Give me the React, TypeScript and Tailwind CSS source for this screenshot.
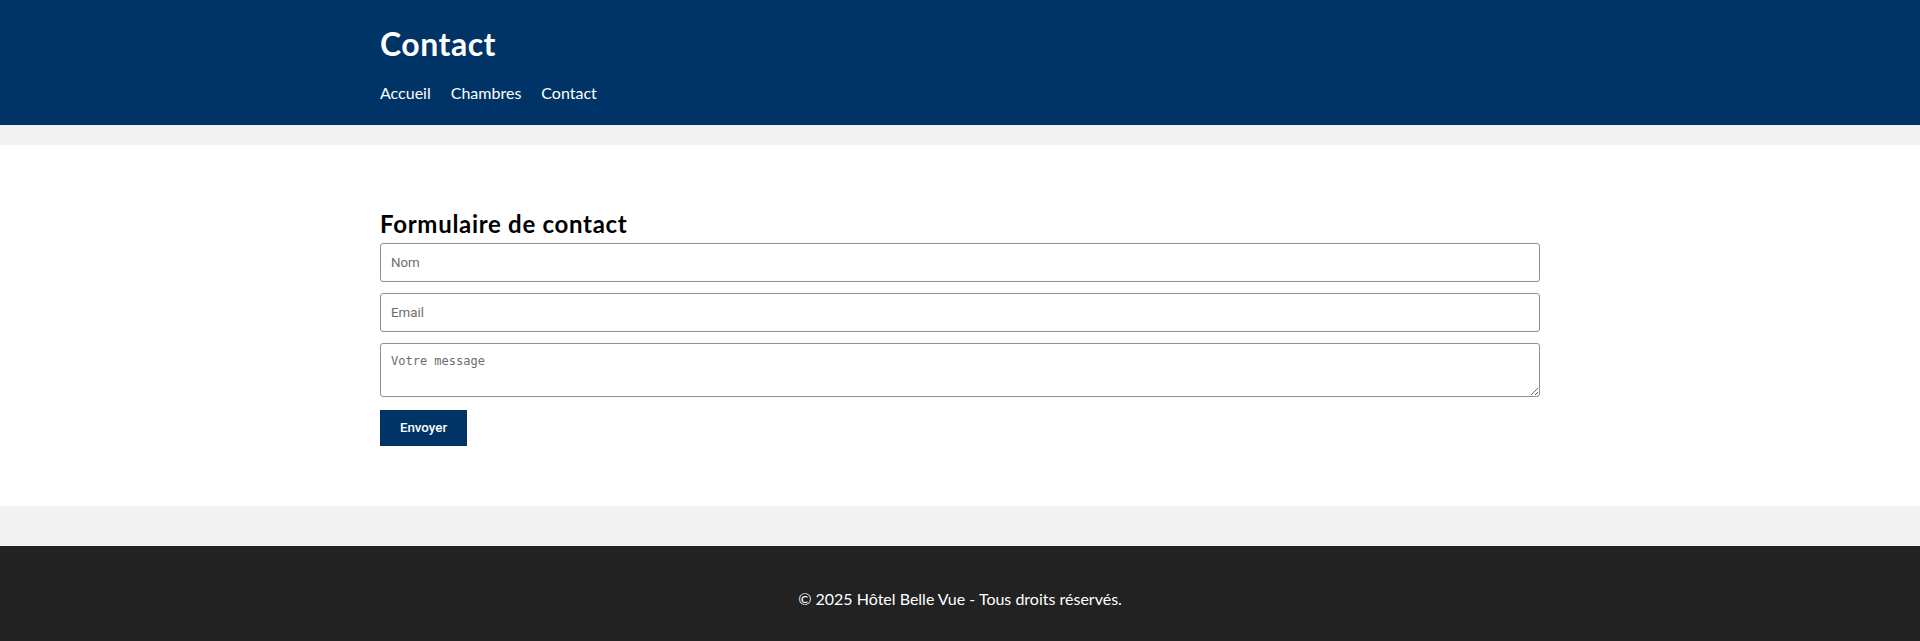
export default function App() {
  return (
    <div className="min-h-screen bg-[#f2f2f2] font-['Lato',sans-serif] text-black">
      <header className="bg-[#003366] pt-6 pb-5 text-white">
        <div className="mx-auto w-[1200px] px-5">
          <h1 className="text-[32px] leading-[40px] font-bold tracking-[0.5px]">Contact</h1>
          <nav className="mt-[17px] flex gap-5 text-[16px] leading-[24px]">
            <a href="#">Accueil</a>
            <a href="#">Chambres</a>
            <a href="#">Contact</a>
          </nav>
        </div>
      </header>

      <main className="mt-5 bg-white pt-[63px] pb-[60px]">
        <section className="mx-auto w-[1200px] px-5">
          <h2 className="mb-[3px] text-[24px] leading-[32px] font-bold tracking-[0.7px]">Formulaire de contact</h2>
          <form onSubmit={e => e.preventDefault()}>
            <input
              type="text"
              placeholder="Nom"
              className="mb-[11px] block h-[39px] w-full rounded-[3px] border border-[#8f8f9d] px-[10px] font-['Roboto',sans-serif] text-[13.33px] placeholder:text-[#6d6d6d]"
            />
            <input
              type="email"
              placeholder="Email"
              className="mb-[11px] block h-[39px] w-full rounded-[3px] border border-[#8f8f9d] px-[10px] font-['Roboto',sans-serif] text-[13.33px] placeholder:text-[#6d6d6d]"
            />
            <textarea
              placeholder="Votre message"
              className="mb-[13px] block h-[54px] w-full rounded-[3px] border border-[#8f8f9d] px-[10px] py-[8px] font-['DejaVu_Sans_Mono',monospace] text-[12px] placeholder:text-[#6d6d6d]"
            />
            <button
              type="submit"
              className="block h-[36px] w-[87px] bg-[#003366] font-['Roboto',sans-serif] text-[13.33px] font-medium text-white"
            >
              Envoyer
            </button>
          </form>
        </section>
      </main>

      <footer className="mt-10 bg-[#222222] pt-[41px] pb-10 text-center text-[16px] leading-[24px] text-white">
        © 2025 Hôtel Belle Vue - Tous droits réservés.
      </footer>
    </div>
  );
}
